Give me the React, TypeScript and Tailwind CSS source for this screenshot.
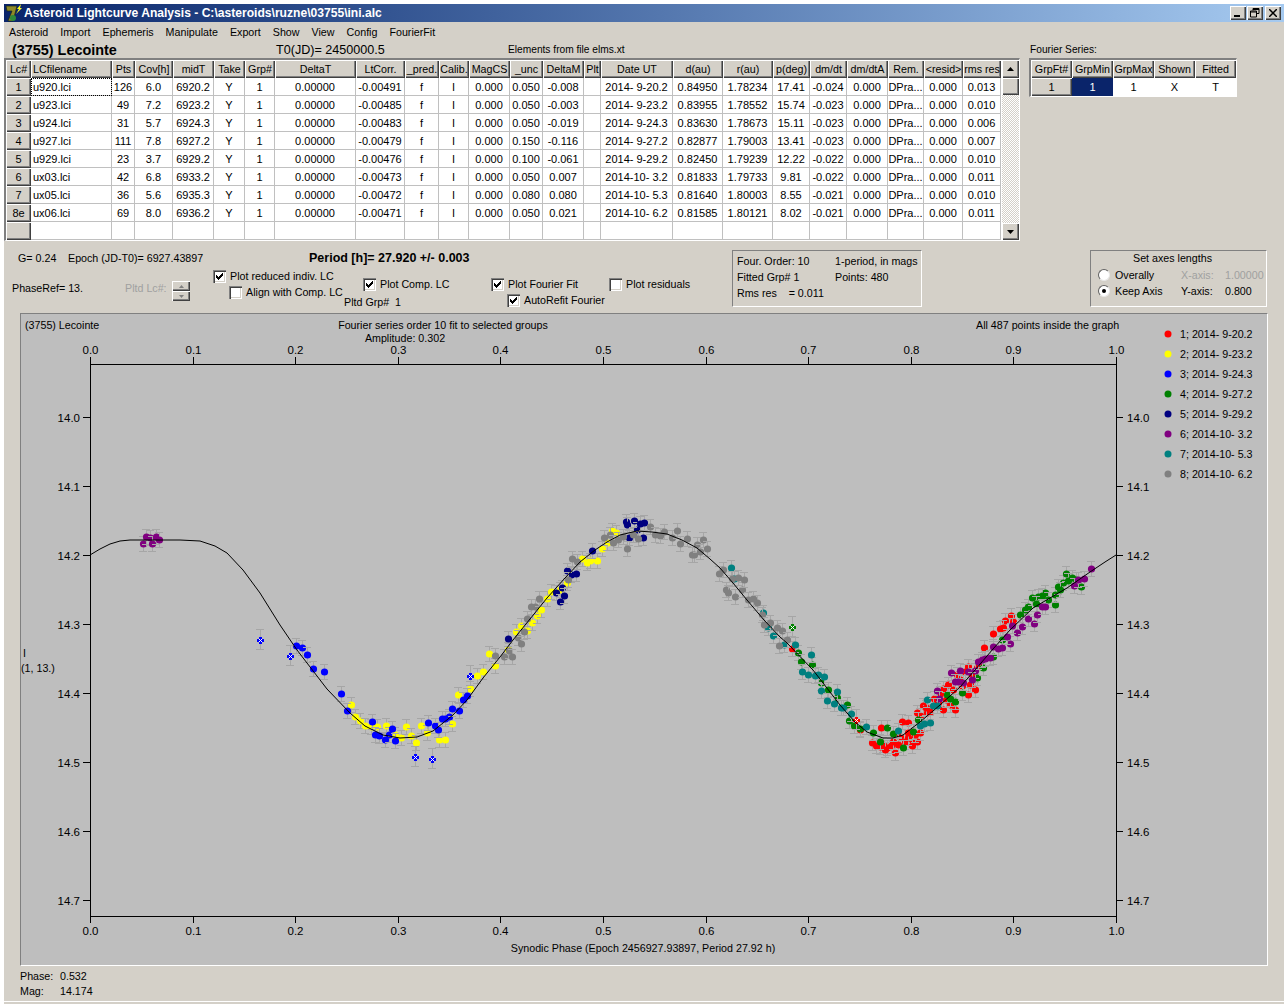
const FONT = '"Liberation Sans", Arial, sans-serif'

const menu = ['Asteroid', 'Import', 'Ephemeris', 'Manipulate', 'Export', 'Show', 'View', 'Config', 'FourierFit']

const headers = ['Lc#', 'LCfilename', 'Pts', 'Cov[h]', 'midT', 'Take', 'Grp#', 'DeltaT', 'LtCorr.', '_pred.', 'Calib.', 'MagCS', '_unc', 'DeltaM', 'Plt', 'Date UT', 'd(au)', 'r(au)', 'p(deg)', 'dm/dt', 'dm/dtA', 'Rem.', '<resid>', 'rms res']

const rows = [
  ['1', 'u920.lci', '126', '6.0', '6920.2', 'Y', '1', '0.00000', '-0.00491', 'f', 'I', '0.000', '0.050', '-0.008', '', '2014- 9-20.2', '0.84950', '1.78234', '17.41', '-0.024', '0.000', 'DPra...', '0.000', '0.013'],
  ['2', 'u923.lci', '49', '7.2', '6923.2', 'Y', '1', '0.00000', '-0.00485', 'f', 'I', '0.000', '0.050', '-0.003', '', '2014- 9-23.2', '0.83955', '1.78552', '15.74', '-0.023', '0.000', 'DPra...', '0.000', '0.010'],
  ['3', 'u924.lci', '31', '5.7', '6924.3', 'Y', '1', '0.00000', '-0.00483', 'f', 'I', '0.000', '0.050', '-0.019', '', '2014- 9-24.3', '0.83630', '1.78673', '15.11', '-0.023', '0.000', 'DPra...', '0.000', '0.006'],
  ['4', 'u927.lci', '111', '7.8', '6927.2', 'Y', '1', '0.00000', '-0.00479', 'f', 'I', '0.000', '0.150', '-0.116', '', '2014- 9-27.2', '0.82877', '1.79003', '13.41', '-0.023', '0.000', 'DPra...', '0.000', '0.007'],
  ['5', 'u929.lci', '23', '3.7', '6929.2', 'Y', '1', '0.00000', '-0.00476', 'f', 'I', '0.000', '0.100', '-0.061', '', '2014- 9-29.2', '0.82450', '1.79239', '12.22', '-0.022', '0.000', 'DPra...', '0.000', '0.010'],
  ['6', 'ux03.lci', '42', '6.8', '6933.2', 'Y', '1', '0.00000', '-0.00473', 'f', 'I', '0.000', '0.050', '0.007', '', '2014-10- 3.2', '0.81833', '1.79733', '9.81', '-0.022', '0.000', 'DPra...', '0.000', '0.011'],
  ['7', 'ux05.lci', '36', '5.6', '6935.3', 'Y', '1', '0.00000', '-0.00472', 'f', 'I', '0.000', '0.080', '0.080', '', '2014-10- 5.3', '0.81640', '1.80003', '8.55', '-0.021', '0.000', 'DPra...', '0.000', '0.010'],
  ['8e', 'ux06.lci', '69', '8.0', '6936.2', 'Y', '1', '0.00000', '-0.00471', 'f', 'I', '0.000', '0.050', '0.021', '', '2014-10- 6.2', '0.81585', '1.80121', '8.02', '-0.021', '0.000', 'DPra...', '0.000', '0.011'],
]

const legend = [
  ['#ff0000', '1; 2014- 9-20.2'],
  ['#ffff00', '2; 2014- 9-23.2'],
  ['#0000ff', '3; 2014- 9-24.3'],
  ['#008000', '4; 2014- 9-27.2'],
  ['#000080', '5; 2014- 9-29.2'],
  ['#800080', '6; 2014-10- 3.2'],
  ['#008080', '7; 2014-10- 5.3'],
  ['#808080', '8; 2014-10- 6.2'],
]

// fitted curve, page pixels read off the plot
const curve = '90,555 100,549 110,544 120,541 130,540 150,540 180,540 200,541 215,546 227,553 243,570 260,593 280,625 297,650 327,689 350,713 365,726 383,735 400,738 417,737 433,731 453,715 467,700 483,678 500,657 513,640 530,619 547,598 565,578 580,562 595,550 607,542 620,535 637,531 652,532 667,534 682,540 697,548 710,559 720,568 733,583 747,600 764,620 780,637 787,643 813,670 840,705 855,722 867,732 883,738 893,738 903,735 920,722 940,705 960,687 975,670 993,649 1010,630 1033,608 1050,598 1067,588 1090,572 1105,562 1116,555'

// measured dots per light curve, drawn in group order so later nights cover earlier ones
const dots: [number, number][][] = [
  [[792, 649], [860, 730], [872, 743], [881, 728], [880, 747], [887, 748], [895, 753], [902, 722], [908, 723], [900, 737], [912, 740], [917, 742], [912, 746], [920, 733], [917, 713], [923, 706], [927, 713], [934, 699], [943, 689], [943, 710], [950, 705], [955, 710], [948, 685], [968, 695], [975, 690], [957, 675], [965, 672], [968, 667], [977, 668], [984, 648], [993, 634], [1000, 629], [1005, 621], [1011, 616], [1013, 622], [930, 712], [938, 703], [962, 686], [972, 676], [883, 745], [891, 746], [905, 742], [915, 735], [876, 746], [885, 750], [898, 745], [908, 738], [920, 716], [926, 708], [940, 694], [946, 700], [953, 690], [960, 680], [970, 685], [980, 662], [1003, 628], [908, 733], [893, 742]],
  [[351, 705], [355, 717], [360, 721], [365, 726], [371, 727], [377, 727], [386, 726], [395, 735], [401, 738], [406, 727], [411, 736], [416, 743], [421, 726], [427, 733], [439, 740], [445, 740], [452, 724], [458, 695], [470, 689], [477, 676], [483, 672], [489, 654], [495, 666], [508, 650], [516, 632], [521, 626], [527, 631], [532, 623], [537, 616], [541, 610], [547, 599], [551, 592], [560, 590], [567, 583], [582, 559], [587, 563], [590, 561], [597, 561], [602, 549], [607, 543], [612, 531], [616, 533]],
  [[296, 646], [302, 648], [307, 655], [313, 669], [324, 672], [341, 694], [347, 711], [372, 722], [375, 735], [379, 736], [385, 740], [389, 735], [392, 729], [395, 741], [428, 723], [435, 726], [438, 730], [442, 719], [445, 719], [449, 717], [452, 709], [459, 711], [463, 700], [467, 696]],
  [[798, 653], [801, 662], [812, 665], [821, 683], [828, 690], [837, 698], [847, 705], [849, 721], [854, 726], [860, 729], [873, 733], [880, 742], [887, 728], [893, 734], [903, 748], [913, 732], [918, 720], [947, 695], [950, 699], [955, 702], [962, 693], [977, 678], [983, 668], [993, 657], [1002, 640], [1020, 615], [1025, 610], [1028, 607], [1032, 598], [1038, 597], [1045, 593], [1055, 605], [1055, 595], [1058, 587], [1063, 583], [1066, 574], [1072, 578], [1081, 587], [1048, 600], [1042, 596], [1036, 604], [1060, 590], [1068, 581], [1076, 580]],
  [[508, 639], [556, 593], [560, 602], [562, 588], [564, 596], [567, 571], [571, 575], [576, 574], [592, 551], [626, 522], [627, 525], [634, 521], [629, 538], [637, 530], [640, 524], [644, 523], [643, 538]],
  [[143, 544], [146, 537], [150, 538], [152, 544], [156, 537], [159, 540], [937, 691], [939, 699], [951, 673], [955, 682], [960, 671], [963, 683], [968, 672], [975, 671], [972, 680], [978, 662], [982, 660], [990, 658], [993, 647], [1002, 648], [1010, 644], [1007, 637], [1017, 633], [1012, 626], [1022, 627], [1028, 619], [1034, 624], [1037, 615], [1042, 607], [1045, 607], [1074, 586], [1078, 580], [1084, 579], [1091, 569], [985, 659], [958, 682], [998, 649]],
  [[731, 568], [734, 579], [763, 613], [768, 628], [773, 636], [784, 645], [795, 645], [811, 655], [802, 672], [808, 675], [815, 676], [818, 675], [824, 677], [821, 691], [827, 701], [834, 704], [837, 692], [841, 708], [843, 708], [851, 714], [866, 727], [898, 731], [920, 726], [924, 724], [930, 723], [927, 700], [933, 706], [937, 706]],
  [[495, 656], [504, 657], [509, 651], [512, 657], [518, 638], [521, 644], [524, 632], [527, 619], [531, 607], [535, 607], [539, 599], [568, 580], [572, 559], [577, 562], [604, 538], [610, 535], [613, 543], [618, 540], [623, 537], [627, 549], [633, 535], [638, 539], [650, 527], [655, 535], [660, 536], [664, 532], [672, 538], [677, 531], [680, 544], [687, 539], [692, 555], [694, 555], [697, 545], [700, 552], [703, 540], [707, 549], [719, 574], [723, 570], [726, 590], [728, 593], [732, 579], [735, 597], [738, 578], [742, 590], [744, 580], [748, 600], [753, 599], [757, 603], [762, 615], [764, 625], [770, 623], [777, 628], [779, 646], [782, 631], [787, 640]],
]

// rejected points get the cross marker
const rejected: [string, number, number][] = [
  ['#0000ff', 260, 640],
  ['#0000ff', 290, 656],
  ['#0000ff', 415, 757],
  ['#0000ff', 432, 759],
  ['#0000ff', 470, 676],
  ['#008000', 792, 627],
  ['#ff0000', 856, 720],
]

const xTicks = [0, 0.1, 0.2, 0.3, 0.4, 0.5, 0.6, 0.7, 0.8, 0.9, 1]
const yTicks = [14.0, 14.1, 14.2, 14.3, 14.4, 14.5, 14.6, 14.7]

const raised = 'shadow-[inset_1px_1px_0_#fff,inset_-1px_-1px_0_#404040,inset_-2px_-2px_0_#808080]'
const sunken = 'border-t-2 border-l-2 border-t-[#808080] border-l-[#808080] border-b border-r border-b-white border-r-white'
const etched = 'border border-t-[#808080] border-l-[#808080] border-b-white border-r-white'

const Check = ({ on, label, className }: { on?: boolean; label: string; className?: string }) => (
  <div className={`flex items-center gap-[4px] h-[14px] whitespace-nowrap ${className ?? ''}`}>
    <span className="w-[13px] h-[13px] bg-white shrink-0 shadow-[inset_1px_1px_0_#808080,inset_2px_2px_0_#404040,inset_-1px_-1px_0_#fff,inset_-2px_-2px_0_#d4d0c8] flex items-center justify-center">
      {on && (
        <svg width="9" height="9" viewBox="0 0 9 9" shapeRendering="crispEdges">
          <path d="M1 3 H2 V4 H3 V5 H4 V4 H5 V3 H6 V2 H7 V1 H8 V4 H7 V5 H6 V6 H5 V7 H4 V8 H3 V7 H2 V6 H1 Z" fill="#000" />
        </svg>
      )}
    </span>
    <span>{label}</span>
  </div>
)

const Radio = ({ on, label }: { on?: boolean; label: string }) => (
  <div className="flex items-center gap-[5px] h-[16px]">
    <span className="w-[12px] h-[12px] rounded-full bg-white border border-t-[#606060] border-l-[#606060] border-b-[#e8e8e8] border-r-[#e8e8e8] flex items-center justify-center">
      {on && <span className="w-[4px] h-[4px] rounded-full bg-black" />}
    </span>
    <span>{label}</span>
  </div>
)

const Arrow = ({ up, color = '#000' }: { up?: boolean; color?: string }) => (
  <svg width="9" height="6" viewBox="0 0 9 6">
    <path d={up ? 'M4.5 1 L8 5 L1 5 Z' : 'M1 1 L8 1 L4.5 5 Z'} fill={color} />
  </svg>
)

const WinButton = ({ children, className }: { children: React.ReactNode; className?: string }) => (
  <div className={`w-[16px] h-[14px] bg-[#d4d0c8] flex items-center justify-center ${raised} ${className ?? ''}`}>{children}</div>
)

const Plot = () => (
  <svg width="1246" height="651" viewBox="21 314 1246 651" className="block" fontSize="10.7" fill="#000" fontFamily={FONT}>
    <text x="25" y="329">(3755) Lecointe</text>
    <text x="443" y="329" textAnchor="middle">Fourier series order 10 fit to selected groups</text>
    <text x="405" y="342" textAnchor="middle">Amplitude: 0.302</text>
    <text x="976" y="329">All 487 points inside the graph</text>
    <text x="23" y="657">I</text>
    <text x="21" y="672">(1, 13.)</text>
    <text x="643" y="952" textAnchor="middle">Synodic Phase (Epoch 2456927.93897, Period 27.92 h)</text>

    <rect x="90.5" y="364.5" width="1026" height="552" fill="none" stroke="#000" />
    {xTicks.map((t) => {
      const x = Math.round(90 + t * 1026) + 0.5
      return (
        <g key={t} fontSize="11.5">
          <line x1={x} x2={x} y1="357" y2="364" stroke="#000" />
          <line x1={x} x2={x} y1="917" y2="923" stroke="#000" />
          <text x={x} y="354" textAnchor="middle">{t.toFixed(1)}</text>
          <text x={x} y="935" textAnchor="middle">{t.toFixed(1)}</text>
        </g>
      )
    })}
    {yTicks.map((t, i) => {
      const y = 417.5 + i * 69
      return (
        <g key={t} fontSize="11.5">
          <line x1="83" x2="90" y1={y} y2={y} stroke="#000" />
          <line x1="1117" x2="1123" y1={y} y2={y} stroke="#000" />
          <text x="80" y={y + 4} textAnchor="end">{t.toFixed(1)}</text>
          <text x="1127" y={y + 4}>{t.toFixed(1)}</text>
        </g>
      )
    })}

    {dots.map((group, g) =>
      group.map(([x, y], i) => (
        <g key={`${g}-${i}`}>
          <path d={`M${x - 4} ${y - 7.5}h8M${x - 4} ${y + 7.5}h8M${x + 0.5} ${y - 7}v14`} stroke="#a6a6a6" fill="none" />
          <circle cx={x + 0.5} cy={y} r="3.6" fill={legend[g][0]} />
        </g>
      )),
    )}
    {rejected.map(([c, x, y]) => (
      <g key={`${x}-${y}`} shapeRendering="crispEdges">
        <path d={`M${x - 4} ${y - 10.5}h8M${x - 4} ${y + 9.5}h8M${x + 0.5} ${y - 10}v20`} stroke="#a6a6a6" fill="none" />
        <path d={`M${x - 3} ${y - 1}h2v-2h3v2h2v3h-2v2h-3v-2h-2z`} fill={c} />
        <path d={`M${x - 1} ${y - 1}h1v1h-1zM${x + 1} ${y - 1}h1v1h-1zM${x} ${y}h1v1h-1zM${x - 1} ${y + 1}h1v1h-1zM${x + 1} ${y + 1}h1v1h-1z`} fill="#fff" />
      </g>
    ))}
    <polyline points={curve} fill="none" stroke="#000" strokeWidth="1" />

    {legend.map(([c, name], i) => (
      <g key={name}>
        <circle cx="1168" cy={334 + i * 20} r="3.5" fill={c} />
        <text x="1180" y={338 + i * 20}>{name}</text>
      </g>
    ))}
  </svg>
)

export default function App() {
  return (
    <div className="w-[1288px] h-[1004px] bg-white pt-1 px-1 overflow-hidden text-[10.7px] leading-none text-black" style={{ fontFamily: FONT }}>
      <div className="h-[997px] bg-[#d4d0c8] flex flex-col">
        {/* title bar */}
        <div className="h-[18px] shrink-0 flex items-center pl-[1px] pr-[3px] bg-gradient-to-r from-[#0a246a] to-[#a6caf0]">
          <svg width="18" height="18" viewBox="0 0 18 18" className="shrink-0">
            <path d="M1 2 H12 L8 17 H3 L7 7 H2 Z" fill="#8f8a28" stroke="#1c2a14" strokeWidth="0.7" />
            <circle cx="8" cy="14" r="3" fill="#2e8a3c" />
            <path d="M16 0 L12 5 H14 L11 10 L17 4 H15 Z" fill="#ffff20" />
          </svg>
          <span className="ml-[1px] font-bold text-white text-[12.1px] whitespace-nowrap">Asteroid Lightcurve Analysis - C:\asteroids\ruzne\03755\ini.alc</span>
          <div className="ml-auto flex">
            <WinButton>
              <span className="w-[6px] h-[2px] bg-black mt-[6px] mr-[2px]" />
            </WinButton>
            <WinButton className="ml-[1px]">
              <svg width="10" height="10" viewBox="0 0 10 10">
                <path d="M3 .5h6v5H7M3 .5v2M3 1.5h6M.5 3h6v6h-6zM.5 4h6" fill="none" stroke="#000" />
              </svg>
            </WinButton>
            <WinButton className="ml-[2px]">
              <svg width="8" height="8" viewBox="0 0 8 8">
                <path d="M0 0 L8 8 M8 0 L0 8" stroke="#000" strokeWidth="1.5" />
              </svg>
            </WinButton>
          </div>
        </div>

        {/* menu */}
        <div className="h-[20px] shrink-0 flex items-center pl-[5px] gap-[12px] text-[10.7px]">
          {menu.map((m) => (
            <span key={m}>{m}</span>
          ))}
        </div>

        {/* caption line */}
        <div className="h-[16px] shrink-0 flex items-center whitespace-nowrap">
          <span className="ml-[8px] w-[264px] font-bold text-[14.4px]">(3755) Lecointe</span>
          <span className="w-[232px] text-[12.6px]">T0(JD)= 2450000.5</span>
          <span className="w-[522px] text-[10.2px]">Elements from file elms.xt</span>
          <span className="text-[10.2px]">Fourier Series:</span>
        </div>

        {/* tables */}
        <div className="h-[183px] shrink-0 flex items-start">
          <div className={`flex bg-white ${sunken}`}>
            <div className="grid grid-cols-[25px_81px_23px_38px_41px_31px_30px_81px_49px_34px_30px_41px_33px_41px_17px_72px_50px_50px_37px_37px_41px_36px_39px_38px] auto-rows-[18px]">
              {headers.map((h, i) => (
                <div key={h} className={`bg-[#d4d0c8] flex items-center whitespace-nowrap overflow-hidden pt-[1px] ${i === 1 ? 'justify-start pl-[2px]' : 'justify-center'} ${raised}`}>{h}</div>
              ))}
              {rows.map((r) =>
                r.map((c, i) =>
                  i === 0 ? (
                    <div key={`${r[0]}h`} className={`bg-[#d4d0c8] text-[11px] flex items-center justify-center pt-[1px] ${raised}`}>{c}</div>
                  ) : (
                    <div
                      key={`${r[0]}-${i}`}
                      className={`flex items-center text-[11px] pt-[1px] whitespace-pre border-r border-b border-[#c0c0c0] overflow-hidden ${i === 1 ? 'justify-start pl-[2px]' : 'justify-center'} ${i === 1 && r[0] === '1' ? 'outline-1 outline-dotted outline-black -outline-offset-1' : ''}`}
                    >
                      {c}
                    </div>
                  ),
                ),
              )}
              {headers.map((h, i) =>
                i === 0 ? (
                  <div key={h} className={`bg-[#d4d0c8] ${raised}`} />
                ) : (
                  <div key={h} className="border-r border-b border-[#c0c0c0]" />
                ),
              )}
            </div>
            {/* scrollbar */}
            <div className="w-[17px] flex flex-col ml-[1px] bg-[repeating-conic-gradient(#d4d0c8_0_25%,#fff_0_50%)] bg-[length:2px_2px]">
              <div className={`h-[18px] bg-[#d4d0c8] flex items-center justify-center ${raised}`}>
                <Arrow up />
              </div>
              <div className={`h-[17px] bg-[#d4d0c8] ${raised}`} />
              <div className={`h-[17px] mt-auto bg-[#d4d0c8] flex items-center justify-center ${raised}`}>
                <Arrow />
              </div>
            </div>
          </div>

          <div className={`ml-[9px] bg-white ${sunken}`}>
            <div className="grid grid-cols-[41px_41px_41px_41px_41px] auto-rows-[18px]">
              {['GrpFt#', 'GrpMin', 'GrpMax', 'Shown', 'Fitted'].map((h) => (
                <div key={h} className={`bg-[#d4d0c8] flex items-center justify-center pt-[1px] ${raised}`}>{h}</div>
              ))}
              <div className={`bg-[#d4d0c8] text-[11px] flex items-center justify-center pt-[1px] ${raised}`}>1</div>
              <div className="bg-[#0a246a] text-white text-[11px] flex items-center justify-center pt-[1px]">1</div>
              <div className="flex items-center justify-center text-[11px] pt-[1px]">1</div>
              <div className="flex items-center justify-center text-[11px] pt-[1px]">X</div>
              <div className="flex items-center justify-center text-[11px] pt-[1px]">T</div>
            </div>
          </div>
        </div>

        {/* options */}
        <div className="h-[72px] shrink-0 flex">
          <div className="w-[728px] flex flex-col">
            <div className="h-[27px] pt-[7px] flex items-center whitespace-nowrap">
              <span className="ml-[14px] w-[50px]">G= 0.24</span>
              <span className="w-[241px]">Epoch (JD-T0)= 6927.43897</span>
              <span className="font-bold text-[12.5px]">Period [h]= 27.920 +/- 0.003</span>
            </div>
            <div className="flex">
              <div className="w-[209px] flex items-center h-[38px] pl-[8px] pt-[2px]">
                <span className="w-[113px]">PhaseRef= 13.</span>
                <span className="w-[47px] text-[#a0a0a0]">Pltd Lc#:</span>
                <div className="w-[18px] flex flex-col mt-[6px]">
                  <div className={`h-[10px] bg-[#d4d0c8] flex items-center justify-center ${raised}`}>
                    <svg width="5" height="3" viewBox="0 0 5 3"><path d="M2.5 0 L5 3 L0 3 Z" fill="#808080" /></svg>
                  </div>
                  <div className={`h-[10px] bg-[#d4d0c8] flex items-center justify-center ${raised}`}>
                    <svg width="5" height="3" viewBox="0 0 5 3"><path d="M0 0 L5 0 L2.5 3 Z" fill="#808080" /></svg>
                  </div>
                </div>
              </div>
              <div className="w-[131px] flex flex-col pt-[1px] gap-[2px]">
                <Check on label="Plot reduced indiv. LC" />
                <Check label="Align with Comp. LC" className="ml-[16px]" />
              </div>
              <div className="w-[147px] flex flex-col pt-[9px]">
                <Check on label="Plot Comp. LC" className="ml-[19px]" />
                <span className="mt-[6px]">Pltd Grp#&nbsp; 1</span>
              </div>
              <div className="w-[118px] flex flex-col pt-[9px] gap-[2px]">
                <Check on label="Plot Fourier Fit" />
                <Check on label="AutoRefit Fourier" className="ml-[16px]" />
              </div>
              <div className="pt-[9px]">
                <Check label="Plot residuals" />
              </div>
            </div>
          </div>

          <div className={`w-[190px] h-[57px] mt-[9px] grid grid-cols-[98px_1fr] pl-[4px] pt-[2px] auto-rows-[16px] items-center whitespace-nowrap ${etched}`}>
            <span>Four. Order: 10</span>
            <span>1-period, in mags</span>
            <span>Fitted Grp# 1</span>
            <span>Points: 480</span>
            <span>Rms res&nbsp; &nbsp; = 0.011</span>
          </div>

          <div className={`w-[177px] h-[57px] mt-[9px] ml-[168px] pl-[7px] flex flex-col ${etched}`}>
            <span className="ml-[35px] h-[14px] flex items-center">Set axes lengths</span>
            <div className="flex mt-[2px]">
              <div className="w-[83px] flex flex-col">
                <Radio label="Overally" />
                <Radio on label="Keep Axis" />
              </div>
              <div className="w-[44px] flex flex-col">
                <span className="h-[16px] flex items-center text-[#a0a0a0]">X-axis:</span>
                <span className="h-[16px] flex items-center">Y-axis:</span>
              </div>
              <div className="flex flex-col">
                <span className="h-[16px] flex items-center text-[#a0a0a0]">1.00000</span>
                <span className="h-[16px] flex items-center">0.800</span>
              </div>
            </div>
          </div>
        </div>

        {/* plot panel */}
        <div className="ml-[16px] w-[1248px] h-[653px] shrink-0 bg-[#bebebe] border border-t-[#808080] border-l-[#808080] border-b-white border-r-white">
          <Plot />
        </div>

        {/* status */}
        <div className="grid grid-cols-[40px_1fr] auto-rows-[15px] items-center pl-[16px] pt-[3px]">
          <span>Phase:</span>
          <span>0.532</span>
          <span>Mag:</span>
          <span>14.174</span>
        </div>
      </div>
      <div className="h-[1px] bg-white" />
      <div className="h-[2px] bg-[#d4d0c8]" />
    </div>
  )
}
